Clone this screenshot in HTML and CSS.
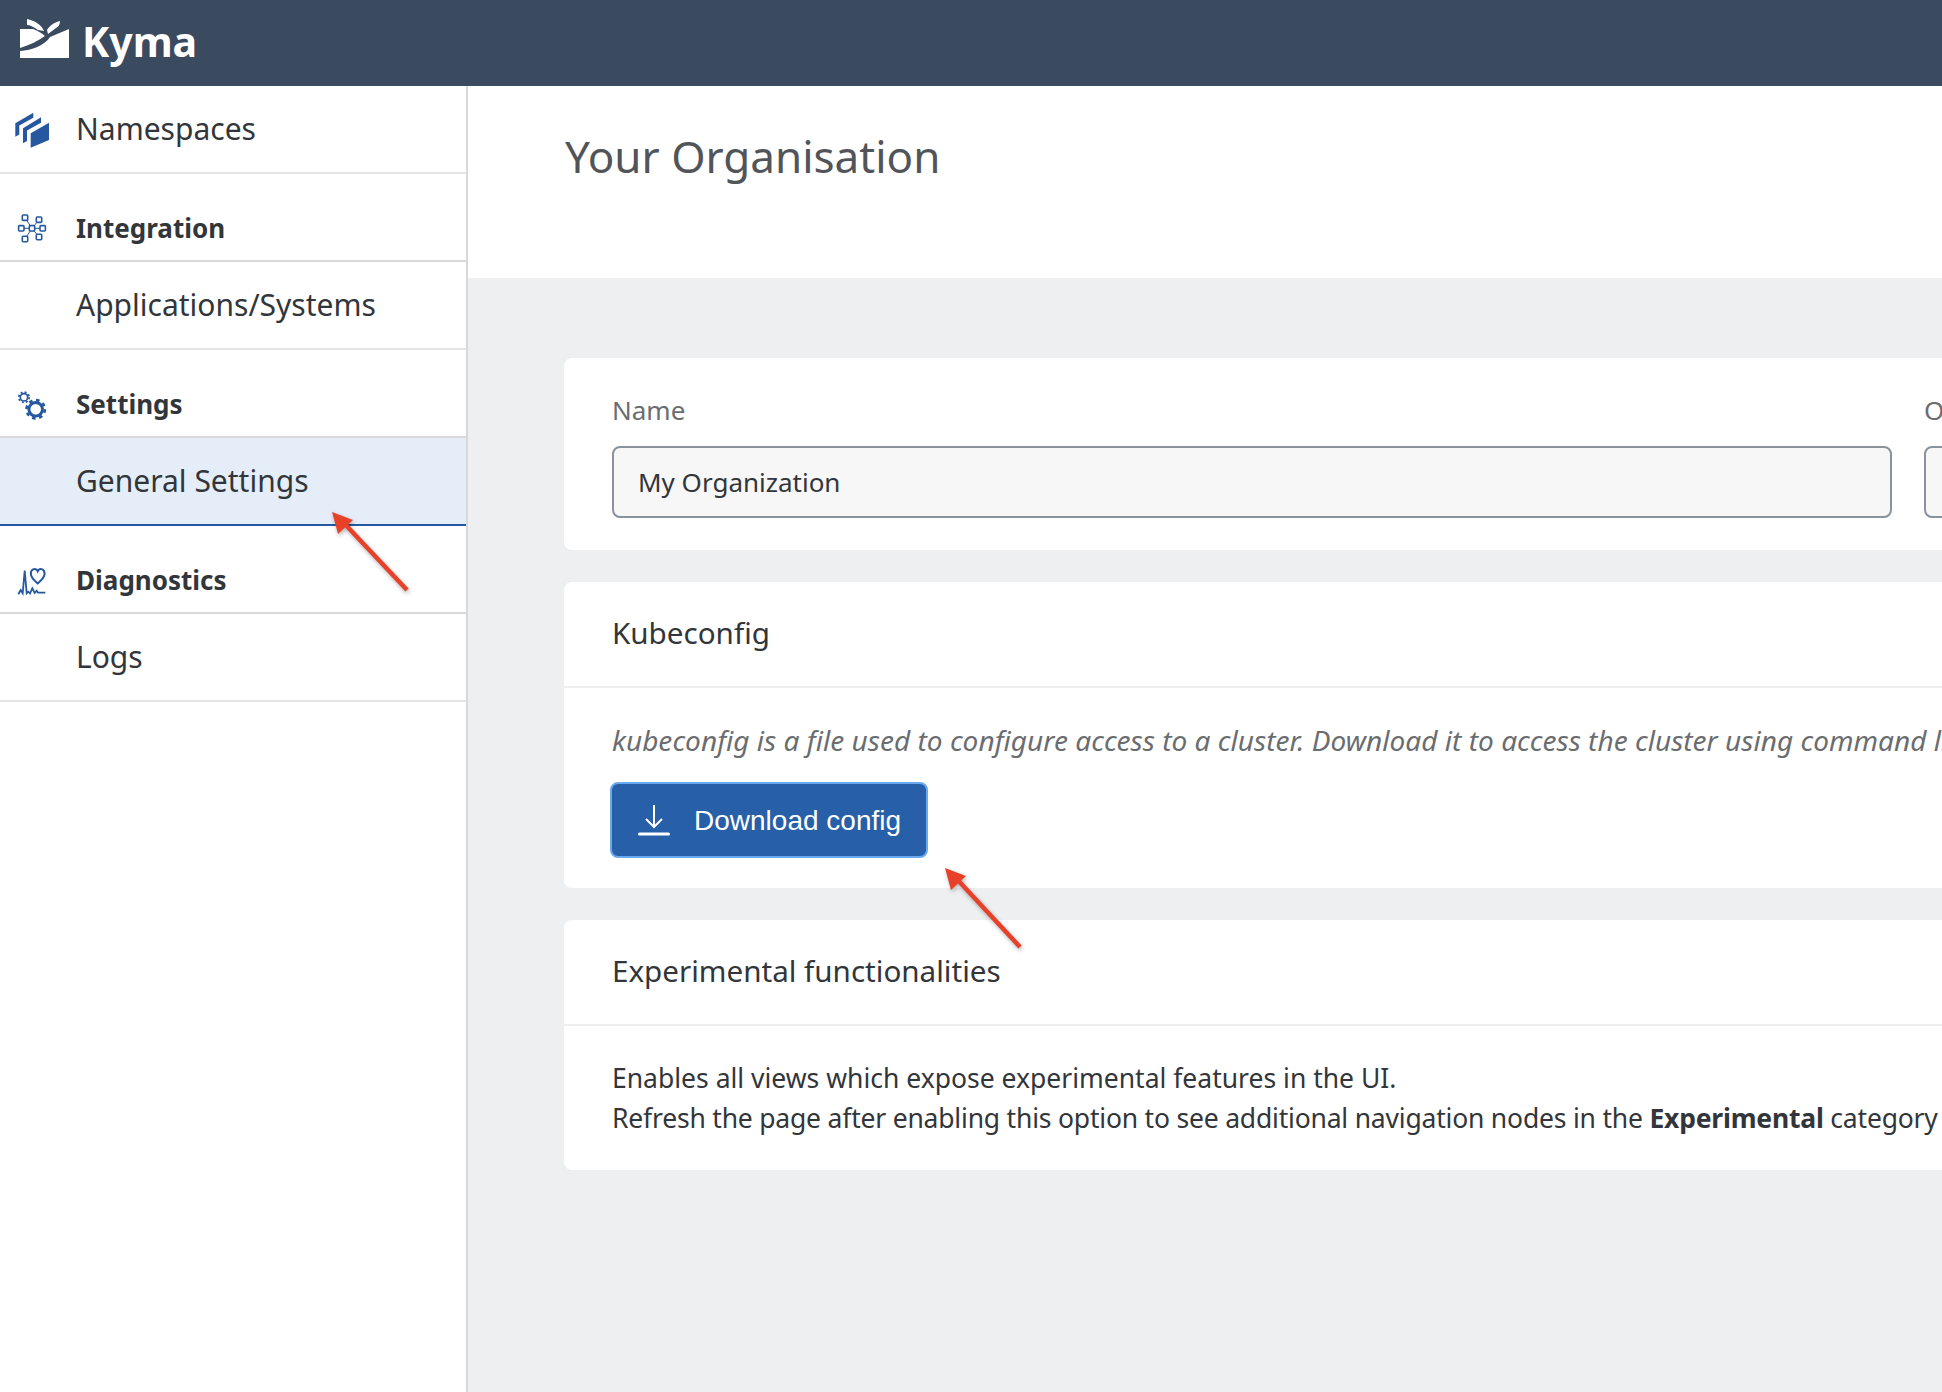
FILE: index.html
```html
<!DOCTYPE html>
<html lang="en">
<head>
    <meta charset="UTF-8">
    <title>Kyma</title>
    <link rel="stylesheet" href="styles.css">
</head>
<body>
    <header class="topbar">
        <svg class="logo" viewBox="18 16 53 43" aria-hidden="true">
            <path d="M27 18C35 20 41 23 44 30L38 29C34 26 30 24 27 24Z"/>
            <path d="M47 29C50 24 55 21 60 20C60 24 58 26 56 27L48 33Z"/>
            <path d="M20 28L33 28C38 30 42 32 45 35C38 40 30 44 20 47Z"/>
            <path d="M20 50C32 49 44 45 50 36L69 28V57H20Z"/>
        </svg>
        <span class="brand">Kyma</span>
    </header>

    <div class="layout">
        <nav class="sidebar">
            <a class="nav-item">
                <svg class="nav-icon" viewBox="14 108 36 40" aria-hidden="true">
                    <path class="fill" d="M15.3 123.3L33.3 112.7V117.7L19.3 125.5V134.5L15.3 136.7Z"/>
                    <path class="fill" d="M23 128.3L41 117.3V122.7L27 130.5V141L23 143.3Z"/>
                    <path class="fill" d="M30.7 133.3L49 122.7V140L30.7 147.7Z"/>
                </svg>
                Namespaces
            </a>

            <div class="nav-group">
                <svg class="nav-icon" viewBox="-18 -20.3 36 40" aria-hidden="true">
                    <path class="line thin" d="M0 0L-10.7 0M0 0L10.7 0M0 0L-7 -10.6M0 0L7 -8.6M0 0L-7 10.7M0 0L7 8.7"/>
                    <g class="boxes">
                        <rect x="-2.7" y="-2.7" width="5.4" height="5.4" rx="1"/>
                        <rect x="-13.4" y="-2.7" width="5.4" height="5.4" rx="1"/>
                        <rect x="8" y="-2.7" width="5.4" height="5.4" rx="1"/>
                        <rect x="-9.7" y="-13.3" width="5.4" height="5.4" rx="1"/>
                        <rect x="4.3" y="-11.3" width="5.4" height="5.4" rx="1"/>
                        <rect x="-9.7" y="8" width="5.4" height="5.4" rx="1"/>
                        <rect x="4.3" y="6" width="5.4" height="5.4" rx="1"/>
                    </g>
                </svg>
                Integration
            </div>
            <a class="nav-item nav-sub">Applications/Systems</a>

            <div class="nav-group">
                <svg class="nav-icon" viewBox="14 384 36 40" aria-hidden="true">
                    <circle class="line" cx="35.7" cy="409.3" r="6.8" stroke-width="3"/>
                    <circle class="line" cx="35.7" cy="409.3" r="9.2" stroke-width="2.6" stroke-dasharray="3.6 3.63"/>
                    <circle class="line" cx="24" cy="397.3" r="3.7" stroke-width="1.7"/>
                    <circle class="line" cx="24" cy="397.3" r="5.2" stroke-width="1.7" stroke-dasharray="2 2.08"/>
                </svg>
                Settings
            </div>
            <a class="nav-item nav-sub active">General Settings</a>

            <div class="nav-group">
                <svg class="nav-icon" viewBox="14 560 36 40" aria-hidden="true">
                    <path class="line" stroke-width="1.8" d="M18.3 594.3L20.7 590L22.7 593.3L24.7 570.7L26.7 593.3L28.3 591.7L30 593.5L32.3 588.3L34.7 593L36.7 590.7L38 592.7H45.3"/>
                    <path class="line" stroke-width="2" d="M37.7 583.5C33 579.5 30.8 577 30.8 573.8C30.8 568.5 36.2 567.5 37.7 571.2C39.2 567.5 44.6 568.5 44.6 573.8C44.6 577 42.4 579.5 37.7 583.5Z"/>
                </svg>
                Diagnostics
            </div>
            <a class="nav-item nav-sub">Logs</a>
        </nav>

        <main class="main">
            <section class="page-head">
                <h1>Your Organisation</h1>
            </section>

            <section class="content">
                <div class="card form-card">
                    <div class="field">
                        <label for="org-name">Name</label>
                        <input type="text" id="org-name" value="My Organization">
                    </div>
                    <div class="field">
                        <label for="org-other">Owner</label>
                        <input type="text" id="org-other">
                    </div>
                </div>

                <div class="card">
                    <h2 class="card-title">Kubeconfig</h2>
                    <div class="card-body kube-body">
                        <p class="hint">kubeconfig is a file used to configure access to a cluster. Download it to access the cluster using command line</p>
                        <button class="btn-primary" type="button">
                            <svg class="btn-icon" viewBox="0 0 32 32" aria-hidden="true">
                                <path d="M16 1V23M8 15L16 23L24 15" fill="none" stroke="#fff" stroke-width="2"/>
                                <rect x="0" y="28.5" width="32" height="3" rx="1.5" fill="#fff"/>
                            </svg>
                            Download config
                        </button>
                    </div>
                </div>

                <div class="card">
                    <h2 class="card-title">Experimental functionalities</h2>
                    <div class="card-body exp-body">
                        <p>Enables all views which expose experimental features in the UI.</p>
                        <p class="exp-note">Refresh the page after enabling this option to see additional navigation nodes in the <strong>Experimental</strong> category</p>
                    </div>
                </div>
            </section>
        </main>
    </div>

    <!-- flechas de anotacion sobre la captura -->
    <svg class="callouts" viewBox="0 0 1942 1392" aria-hidden="true">
        <g class="arrow">
            <path d="M407 590L341 520" stroke-width="4.5"/>
            <path class="head" d="M332 512L353 520L338 534Z"/>
        </g>
        <g class="arrow">
            <path d="M1020 947L954 876" stroke-width="4.5"/>
            <path class="head" d="M945 868L966 876L951 890Z"/>
        </g>
    </svg>
</body>
</html>
```

FILE: styles.css
```css
* {
    box-sizing: border-box;
}

html, body {
    height: 100%;
}

body {
    margin: 0;
    height: 1392px;
    overflow: hidden;
    position: relative;
    font-family: 'Noto Sans', Arial, sans-serif;
    color: #32363a;
    background: #ffffff;
}

/* Barra superior */
.topbar {
    height: 86px;
    background-color: #3a4a5f;
    color: #ffffff;
    display: flex;
    align-items: center;
    padding-left: 18px;
}

.logo {
    width: 53px;
    height: 43px;
    fill: #ffffff;
    margin-top: -9px;
}

.brand {
    font-size: 41px;
    font-weight: 700;
    margin-left: 11px;
    margin-top: -5px;
}

.layout {
    display: flex;
    height: 1306px;
}

/* Menu lateral */
.sidebar {
    width: 468px;
    flex-shrink: 0;
    background: #ffffff;
    border-right: 2px solid #d9d9d9;
}

.nav-item,
.nav-group {
    display: flex;
    align-items: center;
    height: 88px;
    border-bottom: 2px solid #e4e4e4;
    font-size: 30px;
}

.nav-item {
    padding-bottom: 2px;
}

.nav-item.nav-sub {
    padding-left: 76px;
}

.nav-group {
    padding-top: 22px;
    font-weight: 700;
    font-size: 26px;
    border-bottom-color: #d9d9d9;
}

.nav-item.active {
    background-color: #e5eef8;
    border-bottom-color: #25589f;
}

.nav-icon {
    width: 36px;
    height: 40px;
    margin-left: 14px;
    margin-right: 26px;
    flex-shrink: 0;
}

.fill {
    fill: #25589f;
}

.line {
    fill: none;
    stroke: #25589f;
}

.thin {
    stroke-width: 1;
}

.boxes rect {
    fill: #ffffff;
    stroke: #25589f;
    stroke-width: 1.6;
}

/* Contenido */
.main {
    flex: 1;
    min-width: 0;
    overflow: hidden;
    background-color: #edeff0;
}

.page-head {
    height: 192px;
    background: #ffffff;
    padding: 37px 0 0 97px;
}

.page-head h1 {
    margin: 0;
    font-size: 44px;
    font-weight: 400;
    line-height: 66px;
    color: #515559;
}

.content {
    width: 2700px;
    padding: 80px 0 0 96px;
    display: flex;
    flex-direction: column;
    gap: 32px;
}

.card {
    background: #ffffff;
    border-radius: 8px;
}

.form-card {
    height: 192px;
    padding: 33px 48px 0;
    display: grid;
    grid-template-columns: 1280px 1280px;
    column-gap: 32px;
}

.field label {
    display: block;
    font-size: 26px;
    line-height: 38px;
    margin-bottom: 17px;
    color: #6a6d70;
}

.field input {
    display: block;
    width: 100%;
    height: 72px;
    padding: 0 24px;
    border: 2px solid #89919a;
    border-radius: 8px;
    background: #f7f7f7;
    font-family: inherit;
    font-size: 26px;
    color: #32363a;
}

.card-title {
    margin: 0;
    height: 106px;
    padding: 0 48px 4px;
    display: flex;
    align-items: center;
    font-size: 29.6px;
    font-weight: 400;
    border-bottom: 2px solid #eeeeee;
}

.card-body {
    padding: 0 48px;
    white-space: nowrap;
}

.card-body p {
    margin: 0;
}

.kube-body {
    height: 200px;
    padding-top: 32px;
}

.hint {
    font-size: 28px;
    line-height: 40px;
    letter-spacing: 0.03px;
    font-style: italic;
    color: #6a6d70;
}

.btn-primary {
    display: flex;
    align-items: center;
    width: 318px;
    height: 76px;
    margin: 22px 0 0 -2px;
    padding: 2px 0 0 0;
    background-color: #2760a9;
    border: 2px solid #6aa8f0;
    border-radius: 8px;
    color: #ffffff;
    font-family: 'Liberation Sans', Arial, sans-serif;
    font-size: 28px;
    line-height: 34px;
}

.btn-icon {
    width: 32px;
    height: 32px;
    margin-left: 26px;
    margin-right: 24px;
    margin-top: -3px;
}

.exp-body {
    height: 144px;
    padding-top: 32px;
    font-size: 26.5px;
    line-height: 40px;
}

.card-body .exp-note {
    letter-spacing: -0.2px;
}

/* Anotaciones */
.callouts {
    position: absolute;
    top: 0;
    left: 0;
    width: 1942px;
    height: 1392px;
    pointer-events: none;
}

.arrow {
    filter: drop-shadow(1px 2px 2px rgba(0, 0, 0, 0.3));
}

.arrow path {
    stroke: #e8412a;
    fill: none;
}

.arrow .head {
    fill: #e8412a;
    stroke: none;
}
```
